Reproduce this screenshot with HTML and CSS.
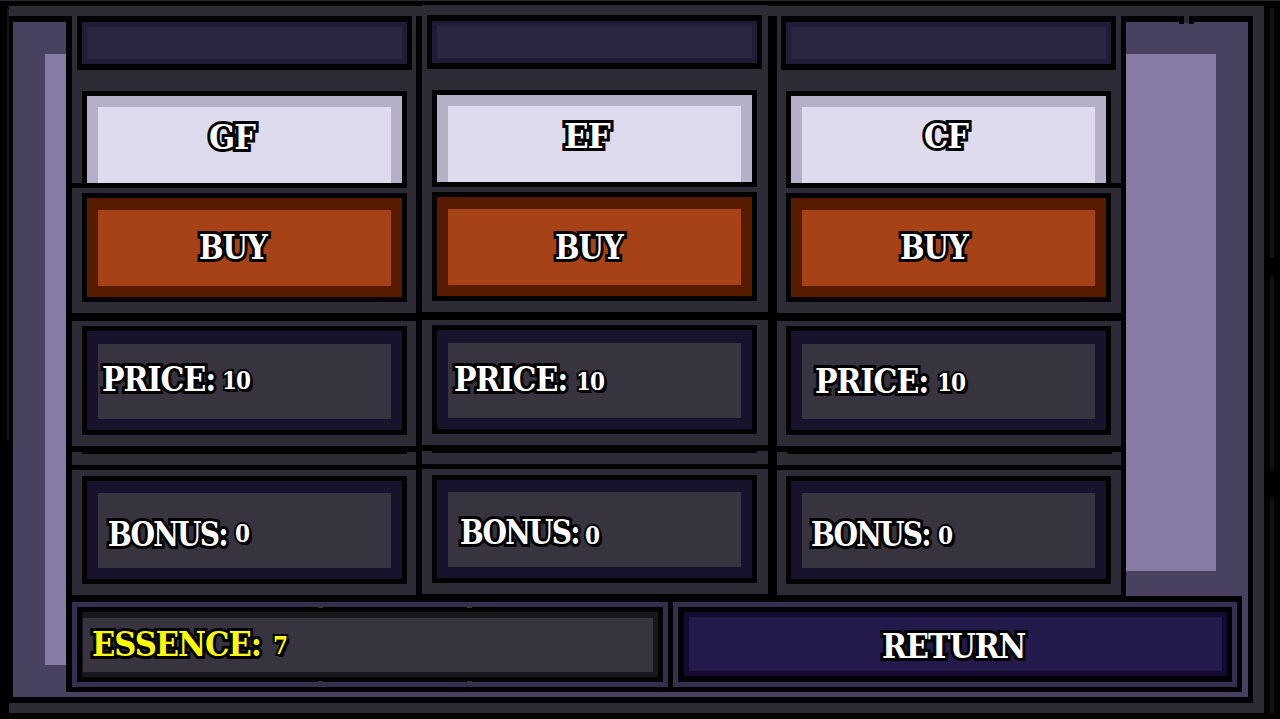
FILE: index.html
```html
<!DOCTYPE html>
<html lang="en">
<head>
<meta charset="utf-8">
<title>Shop</title>
<link rel="stylesheet" href="styles.css">
</head>
<body>
<div class="game">
  <i class="seam seam-left"></i>
  <i class="seam seam-right-a"></i>
  <i class="seam seam-right-b"></i>
  <i class="seam seam-right-c"></i>
  <div class="frame">
    <div class="stage">
      <div class="wall wall-left"></div>
      <div class="wall wall-right"></div>
    </div>
  </div>
  <i class="notch"></i>
  <main class="shop">
    <section class="column first">
      <div class="header"></div>
      <div class="card name"><span class="label">GF</span></div>
      <button class="card buy"><span class="label">BUY</span></button>
      <div class="rule"></div>
      <div class="card stat price"><span class="label">PRICE:</span><span class="value">10</span></div>
      <div class="rule stepped"></div>
      <div class="rule thin"></div>
      <div class="card stat bonus"><span class="label">BONUS:</span><span class="value">0</span></div>
    </section>
    <section class="column second">
      <div class="header"></div>
      <div class="card name"><span class="label">EF</span></div>
      <button class="card buy"><span class="label">BUY</span></button>
      <div class="rule"></div>
      <div class="card stat price"><span class="label">PRICE:</span><span class="value">10</span></div>
      <div class="rule stepped"></div>
      <div class="rule thin"></div>
      <div class="card stat bonus"><span class="label">BONUS:</span><span class="value">0</span></div>
    </section>
    <section class="column third">
      <div class="header"></div>
      <div class="card name"><span class="label">CF</span></div>
      <button class="card buy"><span class="label">BUY</span></button>
      <div class="rule"></div>
      <div class="card stat price"><span class="label">PRICE:</span><span class="value">10</span></div>
      <div class="rule stepped"></div>
      <div class="rule thin"></div>
      <div class="card stat bonus"><span class="label">BONUS:</span><span class="value">0</span></div>
    </section>
  </main>
  <footer class="footer">
    <div class="ring essence"><div class="plate">
      <span class="label">ESSENCE:</span><span class="value">7</span>
    </div><i class="tick t1"></i><i class="tick t2"></i><i class="tick t3"></i><i class="tick t4"></i></div>
    <div class="ring return"><button class="plate"><span class="label">RETURN</span></button></div>
  </footer>
</div>
</body>
</html>
```
FILE: styles.css
```css
* { box-sizing: border-box; }
body { margin: 0; background: #000; overflow: hidden; }
button { font: inherit; border-radius: 0; margin: 0; padding: 0; }

.game {
  position: relative;
  width: 1280px;
  height: 719px;
  padding: 5px 16px 6px 9px;
  background: #000;
  border-top: 1px solid #2b2b2d;
  font-family: "DejaVu Serif Condensed", "DejaVu Serif", serif;
  font-stretch: condensed;
  font-weight: 700;
  color: #fff;
}
.frame { height: 707px; padding: 10px 11px 10px 0; background: #2d2b35; }
.stage {
  display: flex;
  justify-content: space-between;
  height: 687px;
  padding: 32px 32px 32px;
  border: solid #000;
  border-width: 6px 5px 6px 4px;
  background: #494160;
}
.wall { background: #877aa5; }
.wall-left { width: 100px; height: 611px; }
.wall-right { width: 200px; height: 517px; }

.seam { position: absolute; width: 4px; left: 1270px; background: #111112; }
.seam-left { left: 7px; width: 2px; top: 8px; height: 431px; background: #151516; }
.seam-right-a { top: 7px; height: 250px; }
.seam-right-b { top: 275px; height: 194px; }
.seam-right-c { top: 497px; height: 215px; }
.notch { position: absolute; left: 1184px; top: 15px; width: 5px; height: 7px; background: #2d2b35; box-shadow: -5px 1px 0 #000, 5px 1px 0 #000; }

/* shop columns over the backdrop */
.shop {
  position: absolute;
  left: 66px;
  top: 15px;
  width: 1060px;
  height: 581px;
  padding: 0 5px 0 6px;
  display: flex;
  align-items: flex-start;
  background: #000;
}
.column {
  width: 344px;
  height: 579px;
  display: flex;
  flex-direction: column;
  background: #2d2b35;
}
.second { width: 346px; height: 589px; margin: -11px 9px 0 6px; padding-top: 10px; }
.header {
  flex: none;
  width: 335px;
  height: 54px;
  margin: 0 0 21px 5px;
  background: #2c2740;
  border: 5px solid #000;
  border-width: 6px 5px;
  box-shadow: inset 0 0 0 5px #221b38;
}
.card {
  flex: none;
  width: 325px;
  height: 109px;
  margin-left: 10px;
  display: flex;
  align-items: flex-start;
  border: 5px solid #000;
}
.third .header { margin-left: 4px; }
.third .card { margin-left: 9px; }
.name {
  height: 97px;
  margin-bottom: 5px;
  background: linear-gradient(#dedbef, #dedbef) 11px 11px / 293px 100% no-repeat #b5afc8;
}
.first .name { box-shadow: -10px 0 0 #000; clip-path: polygon(0 0, 100% 0, 100% 100%, -10px 100%, -10px 92px, 0 92px); }
.third .name { box-shadow: 10px 0 0 #000; clip-path: polygon(0 0, 100% 0, 100% 92px, 336px 92px, 336px 100%, 0 100%); }
.buy { color: #fff; background: #a74216; border: 5px solid #000; box-shadow: inset 0 12px 0 #571c00, inset 0 0 0 11px #571c00; }
.stat { background: #37343f; box-shadow: inset 0 13px 0 #18122c, inset 0 0 0 11px #18122c; }
.bonus { height: 108px; box-shadow: inset 0 12px 0 #18122c, inset 0 0 0 11px #18122c; }
.rule { flex: none; height: 8px; margin: 11px 0 5px; background: #000; }
.stepped { margin-bottom: 11px; background: linear-gradient(#000, #000) 10px 0 / 325px 8px no-repeat, linear-gradient(#000 6px, transparent 6px); }
.thin { height: 5px; margin: 0 0 6px; }

.label {
  font-size: 34px;
  line-height: 25px;
  height: 25px;
  letter-spacing: -1px;
  white-space: nowrap;
  -webkit-text-stroke: 6px #000;
  paint-order: stroke fill;
  stroke-linejoin: round;
  transform-origin: 0 0;
}
.value {
  font-size: 24px;
  line-height: 18px;
  height: 18px;
  letter-spacing: -1px;
  -webkit-text-stroke: 4px #000;
  paint-order: stroke fill;
  text-shadow: 2px 1px 0 #000, 3px 3px 0 #000, 1px 3px 0 #000;
}

.name .label { margin: 29px 0 0 122px; }
.second .name .label { margin: 29px 0 0 127px; transform: scaleX(1.06); }
.third .name .label { margin: 28px 0 0 133px; }
.buy .label { margin: 37px 0 0 112px; transform: scaleX(.95); }
.second .buy .label { margin: 38px 0 0 118px; }
.third .buy .label { margin-left: 109px; }
.price .label { margin: 36px 0 0 15px; width: 120px; transform: scaleX(.98); }
.price .value { margin-top: 41px; }
.second .price .label { margin: 37px 0 0 17px; width: 122px; }
.second .price .value { margin-top: 43px; }
.third .price .label { margin: 38px 0 0 24px; width: 122px; }
.third .price .value { margin-top: 43px; }
.bonus .label { margin: 41px 0 0 21px; width: 127px; letter-spacing: -2px; transform: scaleX(.92); }
.bonus .value { margin-top: 44px; }
.second .bonus .label { margin: 40px 0 0 23px; width: 125px; }
.second .bonus .value { margin-top: 47px; }
.third .bonus .label { margin-left: 20px; width: 127px; }
.third .bonus .value { margin-top: 46px; }

.footer {
  position: absolute;
  left: 66px;
  top: 595px;
  width: 1176px;
  height: 96px;
  padding: 6px 5px 5px 6px;
  display: flex;
  gap: 5px;
  background: #000;
}
.ring { position: relative; height: 85px; padding: 5px; background: #362d4f; }
.essence { width: 596px; }
.return { width: 564px; }
.plate {
  width: 100%;
  height: 75px;
  display: flex;
  align-items: flex-start;
  border: 5px solid #000;
  background: #373440;
  box-shadow: inset -5px 0 0 #18171c, inset 1px 6px 0 #18171c, inset 0 -5px 0 #18171c;
}
.essence .plate { color: #ff0; }
.essence .label { margin: 20px 0 0 10px; width: 181px; }
.essence .value { margin-top: 25px; }
.return .plate { color: #fff; background: #24194b; border-width: 5px 5px 6px 6px; box-shadow: inset 0 0 0 5px #120a30; }
.return .label { margin: 22px 0 0 198px; transform: scaleX(.985); }
.tick { position: absolute; width: 5px; height: 2px; background: #37343f; }
.t1, .t2 { left: 246px; }
.t3, .t4 { left: 395px; }
.t1, .t3 { top: 4px; }
.t2, .t4 { top: 79px; }
```
